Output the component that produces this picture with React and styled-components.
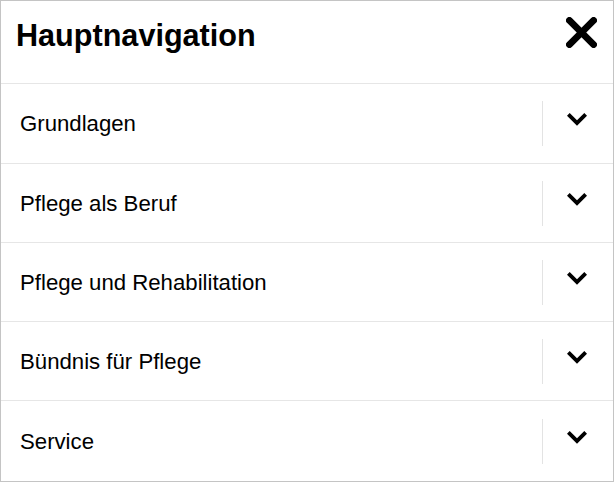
import React from "react";
import styled, { createGlobalStyle } from "styled-components";

const Global = createGlobalStyle`
  html, body { margin: 0; padding: 0; background: #ffffff; }
  * { box-sizing: border-box; }
`;

const Panel = styled.nav`
  width: 614px;
  height: 482px;
  border: 1px solid #c4c4c4;
  background: #fff;
  display: flex;
  flex-direction: column;
  font-family: "Liberation Sans", Arial, sans-serif;
  color: #000;
`;

const Header = styled.header`
  height: 83px;
  flex: none;
  border-bottom: 1px solid #e6e6e6;
  display: flex;
  justify-content: space-between;
  align-items: flex-start;
  padding: 17px 16px 0 15px;
`;

const Title = styled.h2`
  margin: 0;
  font-size: 30.6px;
  font-weight: 700;
  line-height: normal;
`;

const CloseButton = styled.button`
  border: 0;
  background: none;
  padding: 0;
  margin: -1px 0 0 0;
  width: 31px;
  height: 31px;
  display: flex;
  cursor: pointer;
`;

const List = styled.ul`
  list-style: none;
  margin: 0;
  padding: 0;
  flex: 1;
  display: flex;
  flex-direction: column;
`;

const Row = styled.li`
  height: ${(p) => (p.$h ? `${p.$h}px` : "auto")};
  flex: ${(p) => (p.$last ? "1" : "none")};
  border-bottom: ${(p) => (p.$last ? "none" : "1px solid #e6e6e6")};
  display: flex;
  align-items: center;
`;

const Label = styled.a`
  flex: 1;
  padding-left: 19px;
  padding-top: 1px;
  font-size: 22.2px;
  line-height: normal;
  color: #000;
  text-decoration: none;
`;

const Divider = styled.span`
  width: 1px;
  height: 45px;
  background: #e3e3e3;
  flex: none;
`;

const Toggle = styled.button`
  width: 70px;
  height: 100%;
  border: 0;
  background: none;
  padding: 0 3px 8px 0;
  display: flex;
  align-items: center;
  justify-content: center;
  cursor: pointer;
`;

const Chevron = () => (
  <svg width="20" height="13" viewBox="0 0 20 13" aria-hidden="true">
    <path d="M0 2.7 L2.7 0 L10 7.3 L17.3 0 L20 2.7 L10 12.7 Z" fill="#000" />
  </svg>
);

const CloseIcon = () => (
  <svg width="31" height="31" viewBox="0 0 31 31" aria-hidden="true">
    <g stroke="#000" strokeWidth="6.8" strokeLinecap="round">
      <line x1="3.4" y1="3.4" x2="27.6" y2="27.6" />
      <line x1="27.6" y1="3.4" x2="3.4" y2="27.6" />
    </g>
  </svg>
);

const items = [
  { label: "Grundlagen", h: 80 },
  { label: "Pflege als Beruf", h: 79 },
  { label: "Pflege und Rehabilitation", h: 79 },
  { label: "Bündnis für Pflege", h: 79 },
  { label: "Service", last: true },
];

export default function App() {
  return (
    <>
      <Global />
      <Panel aria-label="Hauptnavigation">
        <Header>
          <Title>Hauptnavigation</Title>
          <CloseButton aria-label="Schließen">
            <CloseIcon />
          </CloseButton>
        </Header>
        <List>
          {items.map((it) => (
            <Row key={it.label} $h={it.h} $last={it.last}>
              <Label href="#">{it.label}</Label>
              <Divider />
              <Toggle aria-label={`${it.label} öffnen`}>
                <Chevron />
              </Toggle>
            </Row>
          ))}
        </List>
      </Panel>
    </>
  );
}
